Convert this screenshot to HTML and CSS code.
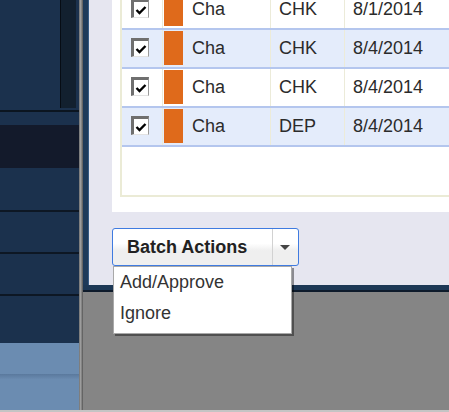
FILE: index.html
```html
<!DOCTYPE html>
<html lang="en">
<head>
  <meta charset="UTF-8">
  <meta name="viewport" content="width=device-width, initial-scale=1.0">
  <title>Transactions</title>
  <link rel="stylesheet" href="styles.css">
</head>
<body>
  <div class="app">
    <!-- Left navigation -->
    <aside class="sidebar">
      <div class="sidebar-top"><div class="sidebar-box"></div></div>
      <div class="sidebar-band"></div>
      <div class="sidebar-band dark"></div>
      <div class="sidebar-row first"></div>
      <div class="sidebar-row"></div>
      <div class="sidebar-row"></div>
      <div class="sidebar-gap"></div>
      <div class="sidebar-foot"><div class="foot-stripe"></div></div>
    </aside>

    <div class="divider"></div>

    <!-- Main area -->
    <main class="main">
      <section class="workspace">
        <div class="workspace-strip"></div>
        <div class="panel">
          <div class="card">
            <div class="grid">
              <div class="row">
                <div class="cell check"><span class="checkbox"><svg viewBox="0 0 12 12" width="12" height="12"><path d="M1.5 6 L4.5 9 L10.5 3" fill="none" stroke="#000" stroke-width="2.4"/></svg></span></div>
                <div class="cell name"><span class="swatch"></span>Cha</div>
                <div class="cell">CHK</div>
                <div class="cell">8/1/2014</div>
              </div>
              <div class="row alt">
                <div class="cell check"><span class="checkbox"><svg viewBox="0 0 12 12" width="12" height="12"><path d="M1.5 6 L4.5 9 L10.5 3" fill="none" stroke="#000" stroke-width="2.4"/></svg></span></div>
                <div class="cell name"><span class="swatch"></span>Cha</div>
                <div class="cell">CHK</div>
                <div class="cell">8/4/2014</div>
              </div>
              <div class="row">
                <div class="cell check"><span class="checkbox"><svg viewBox="0 0 12 12" width="12" height="12"><path d="M1.5 6 L4.5 9 L10.5 3" fill="none" stroke="#000" stroke-width="2.4"/></svg></span></div>
                <div class="cell name"><span class="swatch"></span>Cha</div>
                <div class="cell">CHK</div>
                <div class="cell">8/4/2014</div>
              </div>
              <div class="row alt">
                <div class="cell check"><span class="checkbox"><svg viewBox="0 0 12 12" width="12" height="12"><path d="M1.5 6 L4.5 9 L10.5 3" fill="none" stroke="#000" stroke-width="2.4"/></svg></span></div>
                <div class="cell name"><span class="swatch"></span>Cha</div>
                <div class="cell">DEP</div>
                <div class="cell">8/4/2014</div>
              </div>
            </div>
          </div>

          <div class="batch">
            <button class="batch-btn">
              <span class="batch-label">Batch Actions</span>
              <span class="batch-toggle"><span class="caret"></span></span>
            </button>
            <ul class="batch-menu">
              <li>Add/Approve</li>
              <li>Ignore</li>
            </ul>
          </div>
        </div>
      </section>
      <div class="backdrop"></div>
    </main>
  </div>
  <div class="edge"></div>
</body>
</html>
```

FILE: styles.css
```css
/* Global */
* {
  margin: 0;
  padding: 0;
  box-sizing: border-box;
}

body {
  width: 449px;
  height: 412px;
  overflow: hidden;
  font-family: "Liberation Sans", Arial, sans-serif;
  font-size: 18px;
  color: #2b2b2b;
  background: #858585;
}

.app {
  display: flex;
  height: 410px;
}

.edge {
  height: 2px;
  background: #c4c4c4;
}

/* Sidebar */
.sidebar {
  width: 79px;
  display: flex;
  flex-direction: column;
  background: #1b314d;
}

.sidebar-top {
  height: 112px;
  border-bottom: 2px solid #0b1520;
  padding-left: 60px;
}

.sidebar-box {
  width: 16px;
  height: 108px;
  background: #12202f;
  border-left: 1px solid #060c14;
}

.sidebar-band {
  height: 13px;
}

.sidebar-band.dark {
  height: 43px;
  background: #131a2b;
}

.sidebar-row {
  height: 42px;
  border-bottom: 2px solid #0d1724;
}

.sidebar-row.first {
  height: 44px;
}

.sidebar-gap {
  height: 47px;
}

.sidebar-foot {
  flex: 1;
  background: #6b8cb1;
  padding-top: 31px;
}

.foot-stripe {
  height: 5px;
  background: linear-gradient(#5a799d, #6a8aaf);
}

.divider {
  width: 4px;
  background: linear-gradient(to right, #6e6e6e, #a0a0a0 40%, #555);
}

/* Main */
.main {
  flex: 1;
  display: flex;
  flex-direction: column;
}

.workspace {
  height: 290px;
  display: flex;
  border-bottom: 5px solid #1d3856;
}

.workspace-strip {
  width: 6px;
  background: #1e3a5a;
  border-right: 1px solid #355a84;
}

.panel {
  flex: 1;
  background: #e6e6f0;
  padding-left: 23px;
}

.backdrop {
  flex: 1;
  background: #858585;
  border-top: 2px solid #0e1b2b;
}

/* Card and grid */
.card {
  margin-top: -9px;
  background: #fff;
  padding: 0 0 15px 8px;
}

.grid {
  height: 206px;
  border-left: 2px solid #ebebd6;
  border-bottom: 2px solid #ebebd6;
}

.row {
  display: grid;
  grid-template-columns: 40px 108px 74px 1fr;
  height: 39px;
  border-bottom: 2px solid #b4c6ee;
}

.row.alt {
  background: #e4ecfb;
}

.cell {
  display: flex;
  align-items: center;
  padding-left: 8px;
  border-left: 1px solid #ecebd9;
  white-space: nowrap;
}

.cell.check {
  border-left: none;
  padding-left: 9px;
}

.cell.name {
  align-items: stretch;
  padding: 1px 0 2px 1px;
  line-height: 34px;
}

.swatch {
  width: 19px;
  margin-right: 9px;
  background: #df6a1b;
}

.checkbox {
  display: flex;
  align-items: center;
  justify-content: center;
  width: 18px;
  height: 19px;
  margin-top: -2px;
  background: #fff;
  border-style: solid;
  border-width: 3px 1px 1px 3px;
  border-color: #6f6f6f #9a9a9a #e2e2e2 #6f6f6f;
}

/* Batch actions */
.batch {
  position: relative;
  width: 187px;
  margin-top: 16px;
}

.batch-btn {
  display: flex;
  width: 187px;
  height: 38px;
  border: 1px solid #3f7be0;
  border-radius: 3px;
  background: linear-gradient(#fff 40%, #efefef 60%);
  font-family: inherit;
  cursor: pointer;
}

.batch-label {
  flex: 1;
  align-self: center;
  text-align: left;
  padding-left: 14px;
  font-size: 18px;
  font-weight: bold;
  color: #222;
}

.batch-toggle {
  width: 26px;
  display: flex;
  align-items: center;
  justify-content: center;
  border-left: 1px solid #d2d2d2;
}

.caret {
  width: 0;
  height: 0;
  margin-left: -1px;
  border-left: 5.5px solid transparent;
  border-right: 5.5px solid transparent;
  border-top: 5px solid #444;
}

.batch-menu {
  position: absolute;
  top: 38px;
  left: 1px;
  width: 179px;
  z-index: 10;
  list-style: none;
  background: #fff;
  border: 1px solid #a9a9a9;
  box-shadow: 2px 2px 0 rgba(0, 0, 0, 0.4);
  padding-bottom: 4px;
}

.batch-menu li {
  line-height: 31px;
  padding-left: 6px;
  color: #333;
}
```
